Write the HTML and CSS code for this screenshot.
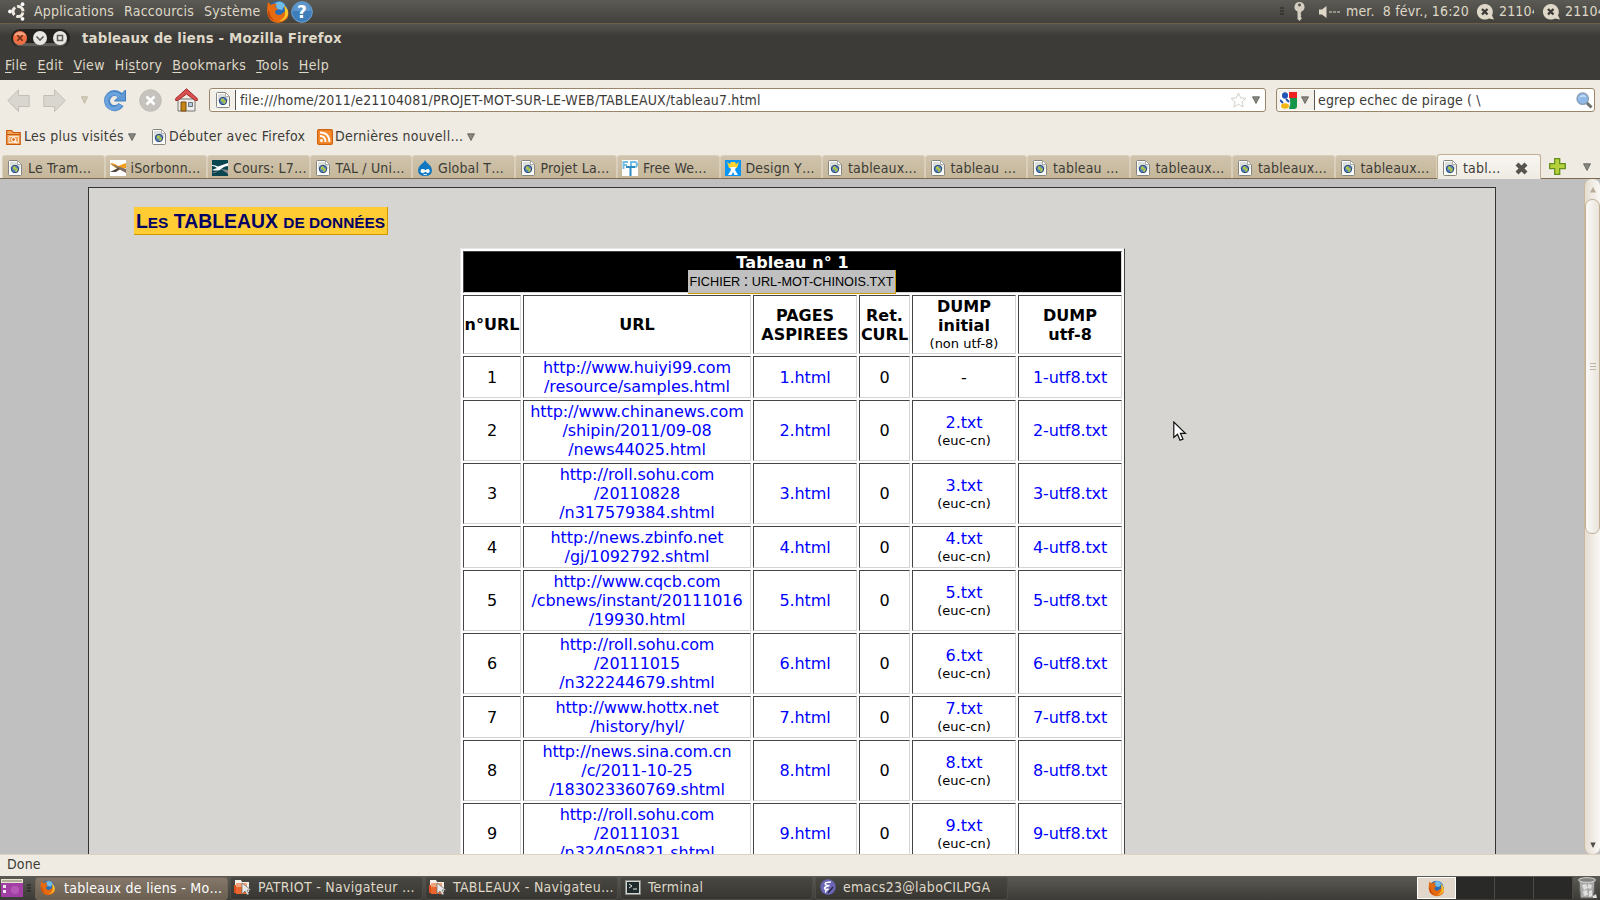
FILE: index.html
```
<!DOCTYPE html>
<html lang="fr">
<head>
    <meta charset="UTF-8">
    <title>tableaux de liens</title>
    <link rel="stylesheet" href="styles.css">
</head>
<body>
    <!-- Shared icons -->
    <svg class="defs" width="0" height="0">
        <symbol id="doc" viewBox="0 0 14 16">
            <path d="M.5 1.5q0-1 1-1h8l4 4v10q0 1-1 1h-11q-1 0-1-1z" fill="#fbfcfa" stroke="#84867f"/>
            <path d="M2 2h6.500l4 4v3H2z" fill="#dcdfdb"/>
            <path d="M9.500.5v4h4z" fill="#fff" stroke="#9a9c96" stroke-width=".8"/>
            <circle cx="7" cy="9" r="3.700" fill="#5b83b8" stroke="#23477f"/>
            <path d="M5 7l2-1 1 2-1 2-2-1zM8 8l2 1-1 2.500-2 .5z" fill="#b3c944"/>
        </symbol>
        <symbol id="down" viewBox="0 0 8 8">
            <path d="M.5.8h7L4 7.500z" fill="#888680" stroke="#5c5b55" stroke-width=".8"/>
        </symbol>
        <symbol id="fox" viewBox="0 0 24 24">
            <circle cx="12" cy="11" r="10" fill="#2a6cb5"/>
            <path d="M9 3q6-4 10 2l-3 5-5-1z" fill="#70bce8"/>
            <path d="M2 2l3 3q3-2 6-1l-2 3 3 2-3 2q0 4 4 4 3 0 4-3l1 1q2-3 0-7 4 3 4.500 8Q22 22 12 23 2 22 1 12 1 6 2 2z" fill="#e56a10"/>
            <path d="M18 5q5 4 4 10-3 6-9 6 7-3 6-9 0-4-1-7z" fill="#fbc52c"/>
            <path d="M3 10q0 9 8 11-9-1-9-9z" fill="#b93a0c"/>
        </symbol>
        <symbol id="folder" viewBox="0 0 17 16">
            <path d="M1 1h6l1 2h7v10H1z" fill="#f5efe9"/>
            <path d="M2 4h11v11H2z" fill="#e9662f"/>
            <path d="M2 4h11v4H2z" fill="#f2a27b"/>
            <path d="M0 6v8h2V6z" fill="#d94f1d"/>
            <path d="M8 4v11l3-3 2 4 2-1-2-4h4z" fill="#e8e8e8" stroke="#66645f" stroke-width=".7"/>
        </symbol>
        <symbol id="chat" viewBox="0 0 18 16">
            <path d="M8 0a8 7.800 0 1 0 4 14.500l5 1-2-4A8 8 0 0 0 8 0z" fill="#dfd8c8"/>
            <path d="M5 5l5.500 5.500M10.500 5L5 10.500" stroke="#3c3b37" stroke-width="2.400"/>
        </symbol>
    </svg>

    <div class="panel">
        <svg class="ubuntu" width="18" height="19" viewBox="0 0 18 19" fill="none">
            <circle cx="10" cy="9.500" r="5" stroke="#efebe2" stroke-width="3" stroke-dasharray="8.500 2" stroke-dashoffset="-1"/>
            <circle cx="2" cy="9.500" r="1.900" fill="#fff"/>
            <circle cx="14.500" cy="2.200" r="1.900" fill="#fff"/>
            <circle cx="14.500" cy="16.800" r="1.900" fill="#fff"/>
        </svg>
        <span class="panel-item apps">Applications</span>
        <span class="panel-item places">Raccourcis</span>
        <span class="panel-item system">Système</span>
        <svg class="fox-launch" width="24" height="24"><use href="#fox"/></svg>
        <svg class="help" width="22" height="22" viewBox="0 0 22 22">
            <circle cx="11" cy="11" r="10.300" fill="#3d7dba" stroke="#6ea5d6"/>
            <path d="M2 10a9 9 0 0 1 18 0z" fill="#5c96cc"/>
            <text x="11" y="17" text-anchor="middle" class="help-mark">?</text>
        </svg>
        <div class="tray">
            <svg class="grip" width="5" height="9" viewBox="0 0 5 9"><path d="M0 1h4M0 4h4M0 7h4" stroke="#24231f"/></svg>
            <svg class="key" width="11" height="19" viewBox="0 0 11 19">
                <path d="M5.500 0a5.300 5 0 0 0-2 9.500V17l2 2 2-2v-1.500L6.500 14l1-1-1-1 1-2.500A5.300 5 0 0 0 5.500 0z" fill="#d4cec0"/>
                <circle cx="5.500" cy="3" r="1.400" fill="#4a4943"/>
            </svg>
            <svg class="sound" width="21" height="12" viewBox="0 0 21 12">
                <path d="M0 3.500h3L7.500 0v12L3 8.500H0z" fill="#dfd8c8"/>
                <path d="M10 6h11" stroke="#dfd8c8" stroke-dasharray="3 1"/>
            </svg>
            <span class="clock">mer.&nbsp; 8 févr., 16:20</span>
            <svg class="chat" width="18" height="16"><use href="#chat"/></svg>
            <span class="user">21104</span>
            <svg class="chat" width="18" height="16"><use href="#chat"/></svg>
            <span class="user">21104</span>
        </div>
    </div>

    <div class="titlebar">
        <div class="buttons">
            <svg width="59" height="18" viewBox="0 0 59 18" fill="none">
                <rect width="59" height="18" rx="9" fill="#23221f"/>
                <path d="M2 12q3 5.500 8 5.500h39q5 0 8-5.500-3 2-8 2H10q-5 0-8-2z" fill="#5d5c56"/>
                <circle cx="9" cy="9" r="7" fill="#ee7044"/>
                <path d="M3 7a6.500 6.500 0 0 1 12 0q-6-2-12 0z" fill="#f8a27f"/>
                <path d="M6.300 6.300l5.400 5.400M11.700 6.300l-5.400 5.400" stroke="#69301d" stroke-width="1.600"/>
                <circle cx="29" cy="9" r="7" fill="#e9e7e3"/>
                <path d="M25.500 7.500L29 11l3.500-3.500" stroke="#5d5b56" stroke-width="1.600"/>
                <circle cx="49" cy="9" r="7" fill="#e9e7e3"/>
                <rect x="46.500" y="6.500" width="5" height="5" stroke="#5d5b56" stroke-width="1.500"/>
            </svg>
        </div>
        <span class="title">tableaux de liens - Mozilla Firefox</span>
    </div>

    <div class="menubar">
        <span><u>F</u>ile</span>
        <span><u>E</u>dit</span>
        <span><u>V</u>iew</span>
        <span>Hi<u>s</u>tory</span>
        <span><u>B</u>ookmarks</span>
        <span><u>T</u>ools</span>
        <span><u>H</u>elp</span>
    </div>

    <div class="toolbar">
        <svg class="back" width="23" height="23" viewBox="0 0 23 23"><path d="M.8 11.500L11.500.8v5.700h10.700v11H11.500v5z" fill="#d9d5cf" stroke="#c3beb7"/></svg>
        <svg class="forward" width="23" height="23" viewBox="0 0 23 23"><path d="M22.200 11.500L11.500.8v5.700H.8v11h10.700v5z" fill="#d9d5cf" stroke="#c3beb7"/></svg>
        <svg class="history" width="7" height="8" viewBox="0 0 7 8"><path d="M.5.8h6l-3 6.500z" fill="#d5cfbd" stroke="#b9af98" stroke-width=".8"/></svg>
        <svg class="reload" width="23" height="23" viewBox="0 0 23 23">
            <path d="M17 15.500a7.500 7.500 0 1 1-.5-8.500" fill="none" stroke="#4a86c8" stroke-width="6"/>
            <path d="M21.500 1v11h-11z" fill="#5f9ad5" stroke="#3f7dbd"/>
            <path d="M16.500 16a7.500 7.500 0 1 1-.5-8.500" fill="none" stroke="#6ca3dc" stroke-width="3.500"/>
        </svg>
        <svg class="stop" width="23" height="23" viewBox="0 0 23 23">
            <circle cx="11.500" cy="11.500" r="10.800" fill="#c6c3be" stroke="#bab6b1" stroke-width=".8"/>
            <path d="M7.500 7.500l8 8M15.500 7.500l-8 8" stroke="#fff" stroke-width="2.500"/>
        </svg>
        <svg class="home" width="23" height="24" viewBox="0 0 23 24">
            <path d="M3 11h17v12H3z" fill="#eeeeec" stroke="#77756f"/>
            <path d="M6 14h5v9H6z" fill="#c58417" stroke="#7b4d0a"/>
            <path d="M13.500 14.500h4v4h-4z" fill="#b5cbe2" stroke="#6a7076"/>
            <path d="M.7 12.500v-2L11.500.8l10.800 9.700v2h-2L11.500 6l-8.800 6.500z" fill="#d8504f" stroke="#a3282b"/>
        </svg>
        <div class="field url">
            <div class="identity"><svg width="14" height="16"><use href="#doc"/></svg></div>
            <span class="address">file:///home/2011/e21104081/PROJET-MOT-SUR-LE-WEB/TABLEAUX/tableau7.html</span>
            <svg class="star" width="17" height="16" viewBox="0 0 17 16"><path d="M8.500 1l2.200 4.900 5.300.5-4 3.500 1.200 5.100-4.700-2.700L3.800 15 5 9.900 1 6.400l5.300-.5z" fill="#fff" stroke="#d2cfca"/></svg>
            <svg class="arrow" width="8" height="8"><use href="#down"/></svg>
        </div>
        <div class="field search">
            <div class="engine">
                <svg width="17" height="17" viewBox="0 0 17 17">
                    <path d="M0 0h9v17H0z" fill="#fff"/>
                    <path d="M9 0h8v6H9z" fill="#e22"/>
                    <path d="M10 6h7v8q0 3-3 3H9q2-5 1-11z" fill="#11964a"/>
                    <ellipse cx="5" cy="3.500" rx="3" ry="3.300" fill="#2055b5"/>
                    <ellipse cx="5" cy="14" rx="4" ry="2.700" fill="#f4b517"/>
                    <path d="M0 8l3 3M6 7l3 3" stroke="#2055b5" stroke-width="2"/>
                </svg>
                <svg width="8" height="8"><use href="#down"/></svg>
            </div>
            <span class="query">egrep echec de pirage ( \</span>
            <svg class="lens" width="17" height="17" viewBox="0 0 17 17">
                <path d="M10.500 10.500l5 5" stroke="#6e706b" stroke-width="3"/>
                <circle cx="6.700" cy="6.700" r="5.700" fill="#8fb9e8" stroke="#8c9fb4" stroke-width="1.400"/>
                <path d="M3 6q1-3 4-3 3 0 3 2-4-1-7 1z" fill="#c9def5"/>
            </svg>
        </div>
    </div>

    <div class="bookmarks">
        <svg class="bm-icon" width="15" height="16" viewBox="0 0 15 16">
            <path d="M.7 1.500h5l1.500 2h7v12H.7z" fill="#f1a45c" stroke="#c8590c" stroke-width="1.200"/>
            <path d="M1 5.500h13" stroke="#c8590c"/>
            <path d="M3 7.500h9.500v6H3z" fill="none" stroke="#fbe3cb"/>
            <circle cx="7.500" cy="10.500" r="2" fill="#e07a22" stroke="#fff"/>
            <path d="M9 12l2 2" stroke="#fff" stroke-width="1.200"/>
        </svg>
        <span class="bm-visited">Les plus visités</span>
        <svg width="8" height="8"><use href="#down"/></svg>
        <svg class="bm-doc" width="14" height="16"><use href="#doc"/></svg>
        <span class="bm-start">Débuter avec Firefox</span>
        <svg class="rss" width="16" height="16" viewBox="0 0 16 16" fill="none">
            <rect x=".6" y=".6" width="14.800" height="14.800" rx="1.500" fill="#f5892c" stroke="#cf610a" stroke-width="1.200"/>
            <circle cx="4.500" cy="11.500" r="1.500" fill="#fff"/>
            <path d="M3 7q5.500 0 5.500 6M3 3.500q9.500 0 9.500 9.500" stroke="#fff" stroke-width="1.800"/>
        </svg>
        <span class="bm-news">Dernières nouvell…</span>
        <svg width="8" height="8"><use href="#down"/></svg>
    </div>

    <div class="tabs">
        <div class="tab"><svg width="14" height="16"><use href="#doc"/></svg><span>Le Tram…</span></div>
        <div class="tab wide">
            <svg width="16" height="16" viewBox="0 0 16 16"><path d="M0 0h16v16H0z" fill="#fff"/><path d="M0 3q5 0 8 3l8-3v5q-4 0-7 2-4-2-9-7z" fill="#f5a01a"/><path d="M0 4l16 9v-4L7 6z" fill="#7d6d64"/><path d="M0 12l8-4 2 1-4 3z" fill="#54463f"/></svg>
            <span>iSorbonn…</span>
        </div>
        <div class="tab wide">
            <svg width="16" height="16" viewBox="0 0 16 16"><path d="M0 0h16v16H0z" fill="#0a4550"/><path d="M0 5q4 0 6 1.500L16 3v3q-4 0-8 4-4 1-8 0l5-2q-2-2-5-2z" fill="#fff"/><path d="M9 9l7 1v4z" fill="#8a8b8b"/><path d="M0 13l6-2-3 2z" fill="#8a8b8b"/></svg>
            <span>Cours: L7…</span>
        </div>
        <div class="tab"><svg width="14" height="16"><use href="#doc"/></svg><span>TAL / Uni…</span></div>
        <div class="tab">
            <svg width="14" height="16" viewBox="0 0 14 16"><path d="M7 0q1 2.500 4 4.500 3 2.500 3 5.500 0 6-7 6t-7-6q0-3 3-5.500Q6.500 2.500 7 0z" fill="#0f78c0"/><path d="M2.500 11q0-2 2-2 1.500 0 3 1.200Q9 9 10 9q1.700 0 1.700 2T10 13q-1 0-2.500-1.300Q6 13 4.500 13q-2 0-2-2z" fill="#fff"/><path d="M5.500 14.200q2 1 3.500 0" stroke="#fff" fill="none"/></svg>
            <span>Global T…</span>
        </div>
        <div class="tab"><svg width="14" height="16"><use href="#doc"/></svg><span>Projet La…</span></div>
        <div class="tab wide">
            <svg width="16" height="16" viewBox="0 0 16 16" fill="none"><path d="M0 0h16v16H0z" fill="#fff"/><path d="M1.500 9V2H6M1.500 5H5M9 8V2h4q2 0 2 2.500T12.500 7H9" stroke="#75bde2" stroke-width="2"/><path d="M4 7h9M8.500 6v10" stroke="#2b8ac0" stroke-width="2"/></svg>
            <span>Free We…</span>
        </div>
        <div class="tab wide">
            <svg width="16" height="16" viewBox="0 0 16 16"><path d="M0 0h16v16H0z" fill="#0b95f5"/><path d="M2 2l3 2 1-2h4l1 2 3-2-2 6H4z" fill="#ffd42e"/><path d="M5 7h6l-1 3 3 5H9.500L8 12l-1.500 3H3l3-5z" fill="#fff"/></svg>
            <span>Design Y…</span>
        </div>
        <div class="tab"><svg width="14" height="16"><use href="#doc"/></svg><span>tableaux…</span></div>
        <div class="tab"><svg width="14" height="16"><use href="#doc"/></svg><span>tableau …</span></div>
        <div class="tab"><svg width="14" height="16"><use href="#doc"/></svg><span>tableau …</span></div>
        <div class="tab"><svg width="14" height="16"><use href="#doc"/></svg><span>tableaux…</span></div>
        <div class="tab"><svg width="14" height="16"><use href="#doc"/></svg><span>tableaux…</span></div>
        <div class="tab"><svg width="14" height="16"><use href="#doc"/></svg><span>tableaux…</span></div>
        <div class="tab active">
            <svg width="14" height="16"><use href="#doc"/></svg><span>tabl…</span>
            <svg class="close" width="13" height="13" viewBox="0 0 13 13"><path d="M2 2l9 9M11 2l-9 9" stroke="#55544f" stroke-width="4.200"/></svg>
        </div>
        <svg class="new-tab" width="17" height="17" viewBox="0 0 17 17"><path d="M5.700.7h5v5h5.600v5h-5.600v5.600h-5v-5.600H.7v-5h5z" fill="#b5d13c" stroke="#658f1d" stroke-width="1.300"/></svg>
        <svg class="all-tabs" width="8" height="8"><use href="#down"/></svg>
    </div>

    <div class="viewport">
        <div class="page">
            <h1>L<span>es</span> TABLEAUX <span>de données</span></h1>
            <table>
                <colgroup><col class="c-num"><col class="c-url"><col class="c-page"><col class="c-curl"><col class="c-dump"><col class="c-dump"></colgroup>
                <tr><th class="caption" colspan="6">Tableau n° 1<br><span class="file">fichier <span>:</span> url-mot-chinois.txt</span></th></tr>
                <tr><th>n°URL</th><th>URL</th><th>PAGES<br>ASPIREES</th><th>Ret.<br>CURL</th><th>DUMP<br>initial<small>(non utf-8)</small></th><th>DUMP<br>utf-8</th></tr>
                <tr><td>1</td><td><a>http://www.huiyi99.com<br>/resource/samples.html</a></td><td><a>1.html</a></td><td>0</td><td>-</td><td><a>1-utf8.txt</a></td></tr>
                <tr><td>2</td><td><a>http://www.chinanews.com<br>/shipin/2011/09-08<br>/news44025.html</a></td><td><a>2.html</a></td><td>0</td><td><a>2.txt</a><small>(euc-cn)</small></td><td><a>2-utf8.txt</a></td></tr>
                <tr><td>3</td><td><a>http://roll.sohu.com<br>/20110828<br>/n317579384.shtml</a></td><td><a>3.html</a></td><td>0</td><td><a>3.txt</a><small>(euc-cn)</small></td><td><a>3-utf8.txt</a></td></tr>
                <tr><td>4</td><td><a>http://news.zbinfo.net<br>/gj/1092792.shtml</a></td><td><a>4.html</a></td><td>0</td><td><a>4.txt</a><small>(euc-cn)</small></td><td><a>4-utf8.txt</a></td></tr>
                <tr><td>5</td><td><a>http://www.cqcb.com<br>/cbnews/instant/20111016<br>/19930.html</a></td><td><a>5.html</a></td><td>0</td><td><a>5.txt</a><small>(euc-cn)</small></td><td><a>5-utf8.txt</a></td></tr>
                <tr><td>6</td><td><a>http://roll.sohu.com<br>/20111015<br>/n322244679.shtml</a></td><td><a>6.html</a></td><td>0</td><td><a>6.txt</a><small>(euc-cn)</small></td><td><a>6-utf8.txt</a></td></tr>
                <tr><td>7</td><td><a>http://www.hottx.net<br>/history/hyl/</a></td><td><a>7.html</a></td><td>0</td><td><a>7.txt</a><small>(euc-cn)</small></td><td><a>7-utf8.txt</a></td></tr>
                <tr><td>8</td><td><a>http://news.sina.com.cn<br>/c/2011-10-25<br>/183023360769.shtml</a></td><td><a>8.html</a></td><td>0</td><td><a>8.txt</a><small>(euc-cn)</small></td><td><a>8-utf8.txt</a></td></tr>
                <tr><td>9</td><td><a>http://roll.sohu.com<br>/20111031<br>/n324050821.shtml</a></td><td><a>9.html</a></td><td>0</td><td><a>9.txt</a><small>(euc-cn)</small></td><td><a>9-utf8.txt</a></td></tr>
            </table>
        </div>
        <div class="scrollbar">
            <svg width="8" height="6" viewBox="0 0 8 6"><path d="M4 0l3 5.500H1z" fill="#b5ab98"/></svg>
            <div class="thumb"><i></i><i></i><i></i></div>
            <svg class="scroll-down" width="6" height="6" viewBox="0 0 6 6"><path d="M.3.500h5.400L3 6z" fill="#4d4c47"/></svg>
        </div>
        <svg class="cursor" width="14" height="21" viewBox="0 0 14 21"><path d="M.8 1v15.500l3.700-3.300L7 19.300l3-1.200-2.600-5.800h5z" fill="#fff" stroke="#111" stroke-width="1.200"/></svg>
    </div>

    <div class="statusbar">Done</div>

    <div class="taskbar">
        <svg class="desktop" width="22" height="18" viewBox="0 0 22 18">
            <path d="M0 0h22v18H0z" fill="#a23fa5"/><path d="M0 0h22v4H0z" fill="#e9e5d2"/><path d="M1 2h20" stroke="#78775f"/><circle cx="14" cy="11" r="4" fill="#b557b5"/><path d="M2 6h3v3H2zM2 11h3v3H2z" fill="#efe6ee"/>
        </svg>
        <svg class="grip" width="5" height="9" viewBox="0 0 5 9"><path d="M0 1h4M0 4h4M0 7h4" stroke="#1f1e1b"/></svg>
        <div class="task current"><svg width="16" height="16"><use href="#fox"/></svg><span>tableaux de liens - Mo…</span></div>
        <div class="task nav"><svg width="17" height="16"><use href="#folder"/></svg><span>PATRIOT - Navigateur …</span></div>
        <div class="task nav"><svg width="17" height="16"><use href="#folder"/></svg><span>TABLEAUX - Navigateu…</span></div>
        <div class="task">
            <svg width="16" height="15" viewBox="0 0 16 15"><path d="M.5.500h15v14H.5z" fill="#d4d5d0" stroke="#888a85"/><path d="M2 2h12v11H2z" fill="#1f2a2c"/><path d="M4 4l3 2-3 2M8 9h4" fill="none" stroke="#e4e9e6"/></svg>
            <span>Terminal</span>
        </div>
        <div class="task">
            <svg width="16" height="16" viewBox="0 0 16 16"><circle cx="8" cy="8" r="7.700" fill="#6a66b5"/><path d="M11 3Q4 3 5.500 5.500q1 1.500 4 1Q4 8 4.500 9.500q1 1.500 4 .5-4 2-2.500 3.500" fill="none" stroke="#fff" stroke-width="1.500"/><path d="M13 8l-5 6" stroke="#26243f" stroke-width="1.300"/></svg>
            <span>emacs23@laboCILPGA</span>
        </div>
        <div class="pager">
            <div class="desk on"><svg width="17" height="17"><use href="#fox"/></svg></div>
            <div class="desk"></div>
            <div class="desk"></div>
            <div class="desk"></div>
        </div>
        <svg class="trash" width="20" height="22" viewBox="0 0 20 22">
            <path d="M1 3h16l-1.500 18h-13z" fill="#a9aaa7" stroke="#5f605d"/><ellipse cx="9" cy="3" rx="8.500" ry="2.300" fill="#82837f" stroke="#d5d6d3"/><path d="M4 8l4-1 2 4-4 2zM10 7l4 1-1 4-3-1zM5 14l4-1 1 5-4 1zM11 14l3-1v6l-3 1zM15 19l3-2 1 4h-4z" fill="#dfe0de"/>
        </svg>
    </div>
</body>
</html>
```

FILE: styles.css
```
* {
    box-sizing: border-box;
}

body {
    margin: 0;
    width: 1600px;
    height: 900px;
    overflow: hidden;
    display: flex;
    flex-direction: column;
    font-family: "DejaVu Sans Condensed", "DejaVu Sans", sans-serif;
    font-stretch: condensed;
    font-size: 14px;
    line-height: 18px;
    letter-spacing: .16px;
    color: #3c3b37;
    background: #efebe3;
    white-space: nowrap;
}

svg {
    display: block;
    flex: none;
}

.defs {
    position: absolute;
}

/* Top panel */
.panel {
    height: 24px;
    flex: none;
    display: flex;
    align-items: center;
    padding-left: 8px;
    background: linear-gradient(#5b5a54, #42413c);
    border-bottom: 1px solid #6b5f49;
    color: #dfd8c8;
}

.panel-item {
    flex: none;
    height: 20px;
    letter-spacing: .25px;
}

.apps {
    width: 90px;
    margin-left: 8px;
}

.places {
    width: 80px;
}

.system {
    width: 62px;
}

.help {
    margin-left: 1px;
}

.help-mark {
    font: bold 17px "DejaVu Sans", sans-serif;
    fill: #fff;
}

.tray {
    flex: 1;
    display: flex;
    align-items: center;
    margin-left: 967px;
    overflow: hidden;
}

.key {
    margin-left: 9px;
}

.sound {
    margin-left: 14px;
}

.clock {
    width: 122px;
    margin-left: 6px;
    flex: none;
    height: 20px;
    letter-spacing: .16px;
}

.chat {
    margin-left: 9px;
}

.user {
    width: 35px;
    height: 20px;
    margin-left: 4px;
    overflow: hidden;
    flex: none;
}

/* Window frame */
.titlebar {
    height: 28px;
    flex: none;
    display: flex;
    align-items: center;
    padding-left: 11px;
    background: linear-gradient(#55544f, #3c3b37 12px);
    color: #dfd8c8;
}

.title {
    margin-left: 12px;
    padding-top: 2px;
    font-family: "DejaVu Sans", sans-serif;
    font-stretch: normal;
    font-size: 13.33px;
    font-weight: bold;
}

.menubar {
    height: 28px;
    flex: none;
    display: flex;
    gap: 10px;
    padding: 4px 5px;
    background: #3c3b37;
    color: #dfd8c8;
    letter-spacing: .38px;
}

.menubar u {
    text-underline-offset: 2px;
}

/* Navigation */
.toolbar {
    height: 40px;
    flex: none;
    display: flex;
    align-items: center;
    padding: 0 5px 0 7px;
}

.forward {
    margin-left: 13px;
}

.history {
    margin-left: 15px;
}

.reload {
    margin-left: 16px;
}

.stop {
    margin-left: 12px;
}

.home {
    margin-left: 13px;
}

.field {
    height: 24px;
    display: flex;
    align-items: center;
    background: #fff;
    border: 1px solid #9b8568;
    border-radius: 3px;
}

.url {
    width: 1057px;
    margin-left: 11px;
}

.identity {
    width: 26px;
    height: 20px;
    padding: 2px 6px;
    background: #f3f0ea;
    border-right: 1px solid #5d584e;
}

.address {
    flex: 1;
    margin-left: 4px;
}

.arrow {
    margin: 0 5px;
}

.search {
    width: 319px;
    margin-left: 10px;
}

.engine {
    width: 38px;
    height: 20px;
    display: flex;
    align-items: center;
    gap: 4px;
    padding-left: 3px;
    background: #f3f0ea;
    border-right: 1px solid #5d584e;
}

.query {
    flex: 1;
    margin-left: 3px;
}

.lens {
    margin-right: 1px;
}

.bookmarks {
    height: 35px;
    flex: none;
    display: flex;
    align-items: center;
    padding: 0 0 4px 6px;
    letter-spacing: .28px;
}

.bookmarks svg {
    margin-top: 3px;
}

.bm-visited {
    width: 104px;
    margin-left: 3px;
}

.bookmarks .bm-doc {
    margin-left: 16px;
}

.bm-start {
    width: 148px;
    margin-left: 3px;
}

.bm-news {
    width: 132px;
    margin-left: 2px;
}

/* Tabs */
.tabs {
    height: 24px;
    flex: none;
    display: flex;
    align-items: flex-end;
    padding-left: 2px;
    border-bottom: 1px solid #7d6a50;
}

.tab {
    width: 102.5px;
    height: 23px;
    flex: none;
    display: flex;
    align-items: center;
    gap: 6px;
    padding: 1px 0 0 5px;
    background: linear-gradient(#cfc3ad, #c5b799);
    border: 1px solid #d9cfbb;
    border-bottom: 0;
    border-radius: 3px 3px 0 0;
}

.tab svg {
    margin-top: 1px;
}

.tab.wide {
    padding-left: 4px;
    gap: 5px;
}

.tab.active {
    position: relative;
    width: 104px;
    height: 25px;
    margin-bottom: -1px;
    background: linear-gradient(#f8f6f2, #efebe3);
    border-color: #c1b093;
}

.close {
    margin-left: 8px;
}

.new-tab {
    margin: 0 0 3px 8px;
}

.all-tabs {
    margin: 0 0 7px 17px;
}

/* Web page */
.viewport {
    height: 675px;
    flex: none;
    display: flex;
    position: relative;
    overflow: hidden;
    background: #c0c0c0;
    padding-left: 88px;
}

.page {
    width: 1408px;
    height: 720px;
    margin-top: 8px;
    flex: none;
    border: 1px solid #333;
    background: #d6d5d1;
    font-family: "DejaVu Sans", sans-serif;
    font-stretch: normal;
    font-size: 16px;
    line-height: 19px;
    letter-spacing: 0;
    color: #000;
}

h1 {
    width: 254px;
    height: 28px;
    margin: 19px 0 13px 45px;
    padding-left: 2px;
    background: #fc3;
    border: solid #c90;
    border-width: 0 1px 1px 0;
    font: bold 19.4px/28px "Liberation Sans", Arial, sans-serif;
    color: #006;
}

h1 span {
    font-size: 15.4px;
    text-transform: uppercase;
}

table {
    width: 665px;
    margin-left: 371px;
    table-layout: fixed;
    border-collapse: separate;
    border-spacing: 2px;
    border: 1px solid #e6e6e3;
    border-right-color: #444;
    background: #fff;
    text-align: center;
}

.c-num { width: 58px; }
.c-url { width: 228px; }
.c-page { width: 104px; }
.c-curl { width: 51px; }
.c-dump { width: 104px; }

th, td {
    padding: 1px 0;
    border: 1px solid;
    border-color: #444 #d6d5d1 #d6d5d1 #444;
}

a {
    color: #00f;
    letter-spacing: -.1px;
}

small {
    display: block;
    font-size: 13px;
    font-weight: normal;
    line-height: 17px;
}

.caption {
    height: 42px;
    background: #000;
    color: #fff;
    letter-spacing: .1px;
}

.file {
    display: block;
    width: 208px;
    height: 24px;
    margin: -2px auto -3px 224px;
    background: #c0c0c0;
    border: solid #c90;
    border-width: 0 1px 1px 0;
    position: relative;
    font: 12.7px/24px "Liberation Sans", Arial, sans-serif;
    letter-spacing: 0;
    text-transform: uppercase;
    color: #000;
}

.file span {
    font-size: 16px;
    line-height: 16px;
}

.scrollbar {
    width: 16px;
    height: 675px;
    margin-left: 88px;
    display: flex;
    flex-direction: column;
    align-items: center;
    padding: 8px 0 6px;
    background: linear-gradient(90deg, #e5ddd1, #faf8f5);
    border-left: 1px solid #c8b99e;
    border-radius: 7px;
}

.thumb {
    width: 15px;
    height: 335px;
    margin: 6px 0 auto;
    display: flex;
    flex-direction: column;
    align-items: center;
    justify-content: center;
    gap: 2px;
    background: linear-gradient(90deg, #fbfaf8, #e9e4db);
    border: 1px solid #c1b093;
    border-radius: 7px;
}

.thumb i {
    width: 6px;
    height: 1px;
    background: #c1b5a2;
}

.cursor {
    position: absolute;
    left: 1173px;
    top: 242px;
}

.statusbar {
    height: 22px;
    flex: none;
    padding: 0 7px;
    border-top: 1px solid #ddd3c2;
}

/* Bottom panel */
.taskbar {
    height: 24px;
    flex: none;
    display: flex;
    align-items: center;
    padding-left: 1px;
    background: linear-gradient(#5b5a54, #3c3b37);
    color: #dfd8c8;
}

.taskbar .grip {
    margin: 0 3px 0 4px;
}

.task {
    width: 193px;
    height: 23px;
    margin-right: 2px;
    flex: none;
    display: flex;
    align-items: center;
    gap: 7px;
    padding: 0 0 2px 4px;
    background: linear-gradient(#484741, #373632);
    border: 1px solid #4d4c46;
    border-radius: 3px;
    letter-spacing: .28px;
}

.task.nav {
    padding-left: 3px;
}

.task.current {
    gap: 8px;
    padding-top: 1px;
    background: linear-gradient(#85786a, #6a5f51);
    border-color: #6f6456;
    color: #fff;
}

.pager {
    display: flex;
    margin-left: 407px;
    height: 22px;
}

.desk {
    width: 39px;
    background: #292927;
    border-right: 1px solid #4b4a45;
}

.desk.on {
    display: flex;
    justify-content: center;
    align-items: center;
    background: #e0d6ca;
    border: 1px solid #fff;
}

.trash {
    margin-left: 5px;
}
```
